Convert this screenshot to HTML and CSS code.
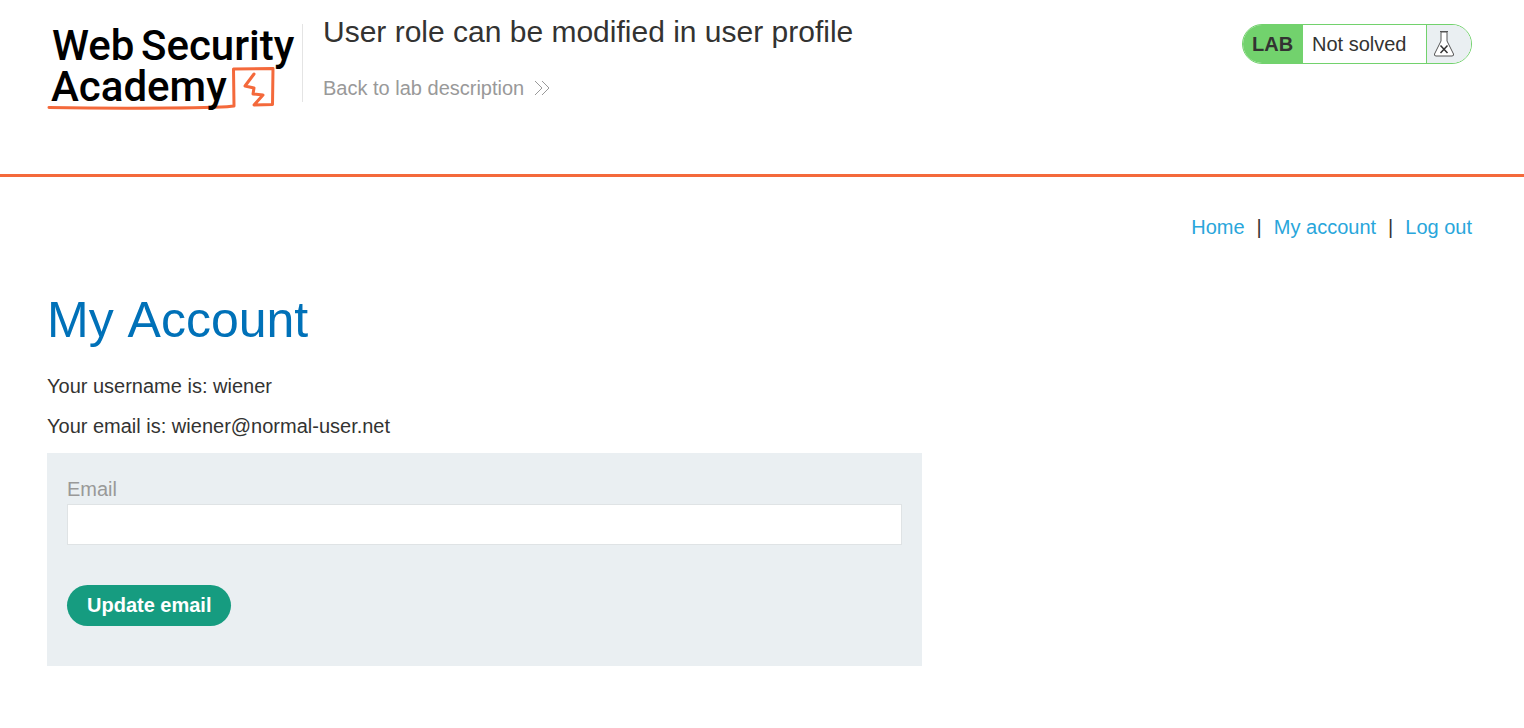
FILE: index.html
```html
<!DOCTYPE html>
<html lang="en">
<head>
<meta charset="utf-8">
<meta name="viewport" content="width=device-width, initial-scale=1">
<title>User role can be modified in user profile</title>
<link rel="stylesheet" href="styles.css">
</head>
<body>
<header class="lab-header">
  <a class="logo" href="#" aria-label="Web Security Academy">
    <svg width="255" height="96" viewBox="0 0 255 96">
      <g fill="none" stroke="#f4693b" stroke-width="3" stroke-linejoin="round" stroke-linecap="round">
        <path d="M2 91.500Q60 92.500 120 92T187 90L186.500 53L226 52.500L225.500 88.500L207 89L216 79L206 78L207 72L198 70L207 58"/>
      </g>
      <g class="logo-text">
        <text x="5" y="44">Web</text>
        <text x="94" y="44">Security</text>
        <text x="4" y="85">Academy</text>
      </g>
    </svg>
  </a>
  <div class="title">
    <h2>User role can be modified in user profile</h2>
    <a class="back" href="#">Back to lab description
      <svg width="16" height="16" viewBox="0 0 16 16" fill="none" stroke="#999" aria-hidden="true"><path d="M1 1L8 8L1 15M8 1L15 8L8 15"/></svg>
    </a>
  </div>
  <div class="status">
    <span class="status-tag">LAB</span>
    <p>Not solved</p>
    <span class="status-icon">
      <svg width="22" height="28" viewBox="0 0 22 28" aria-hidden="true">
        <path d="M8 2V11L1.500 24Q1 26 3 26H19Q21 26 20.500 24L14 11V2Z" fill="#fff" stroke="#555"/>
        <path d="M7 1.500H15" stroke="#555"/>
        <path d="M7.500 15.500L14.500 23M14.500 15.500L7.500 23" stroke="#333" stroke-width="1.500"/>
      </svg>
    </span>
  </div>
</header>
<main class="page">
  <nav class="top-links">
    <a href="#">Home</a><span>|</span><a href="#">My account</a><span>|</span><a href="#">Log out</a>
  </nav>
  <h1>My Account</h1>
  <p>Your username is: wiener</p>
  <p>Your email is: wiener@normal-user.net</p>
  <form class="email-form">
    <label for="email">Email</label>
    <input id="email" type="email" name="email">
    <button type="submit">Update email</button>
  </form>
</main>
</body>
</html>
```
FILE: styles.css
```css
* { box-sizing: border-box; }
body {
  margin: 0;
  font: 20px/24px "Liberation Sans", Arial, sans-serif;
  color: #333332;
  background: #fff;
}
h1, h2, p { margin: 0; font-weight: 400; }
a { color: #29a6db; text-decoration: none; }
.lab-header {
  display: flex;
  align-items: flex-start;
  min-height: 177px;
  padding: 16px 52px 0 47px;
  border-bottom: 3px solid #f4693b;
}
.logo { flex: none; }
.logo svg { display: block; }
.logo-text { font: 500 42px Roboto, sans-serif; fill: #000; }
.title {
  flex: 1;
  margin-top: 8px;
  height: 78px;
  padding-left: 20px;
  border-left: 1px solid #e4e4e4;
}
.title h2 { font-size: 30px; line-height: 36px; margin-top: -10px; }
.back {
  display: inline-flex;
  align-items: center;
  gap: 10px;
  margin-top: 26px;
  color: #999;
}
.status {
  display: flex;
  height: 40px;
  margin-top: 8px;
  border: 1px solid #72d26d;
  border-radius: 20px;
  overflow: hidden;
  line-height: 38px;
}
.status-tag { width: 60px; padding-left: 9px; background: #72d26d; font-weight: 700; }
.status p { width: 123px; padding-left: 9px; }
.status-icon {
  display: flex;
  align-items: center;
  width: 45px;
  padding-left: 6px;
  border-left: 1px solid #72d26d;
  background: #eaeff2;
}
.page { padding: 38px 52px 40px 47px; }
.top-links { display: flex; justify-content: flex-end; gap: 12px; }
h1 {
  margin: 51px 0 24px;
  font-size: 50px;
  line-height: 60px;
  font-kerning: none;
  color: #0071b8;
}
.page p { margin-bottom: 16px; }
.email-form {
  display: flex;
  flex-direction: column;
  align-items: flex-start;
  max-width: 875px;
  margin-top: -1px;
  padding: 24px 20px 40px;
  background: #eaeff2;
}
.email-form label { color: #999; }
.email-form input {
  width: 100%;
  height: 41px;
  margin: 3px 0 40px;
  padding: 0 10px;
  border: 1px solid #dfe3e5;
  background: #fff;
  font: inherit;
}
.email-form button {
  height: 41px;
  padding: 0 20px 2px;
  border: 0;
  border-radius: 21px;
  background: #169c80;
  color: #fff;
  font: inherit;
  font-weight: 700;
}
```
